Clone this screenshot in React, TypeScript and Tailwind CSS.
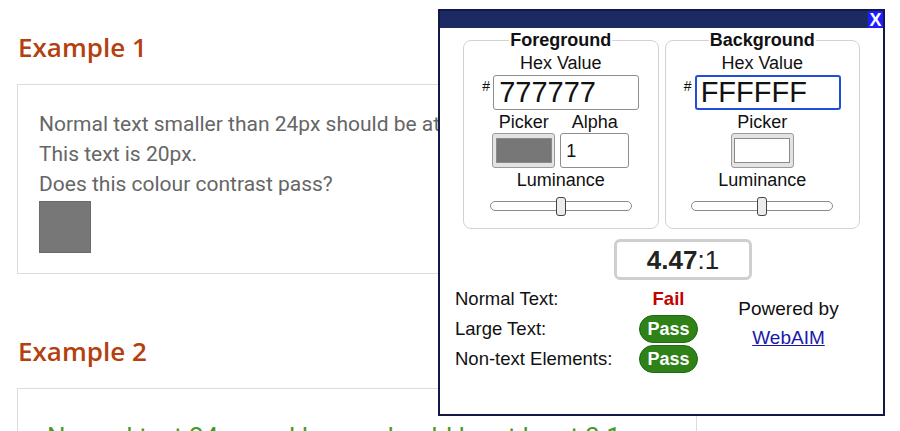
import React from "react";

function Slider() {
  return (
    <div className="relative mx-auto mt-[11px] h-[10px] w-[142px] rounded-full border border-[#8a8a8a] bg-white">
      <div className="absolute left-[65px] top-[-5px] h-[19px] w-[10px] rounded-[3px] border border-[#444] bg-[#ececec]" />
    </div>
  );
}

function Label({ children }: { children: React.ReactNode }) {
  return <div className="text-center text-[18px] leading-[20px] text-[#111]">{children}</div>;
}

function Pass() {
  return (
    <span className="inline-flex h-[28px] w-[59px] items-center justify-center rounded-full border border-[#1f6a12] bg-[#2e8217] text-[18px] font-bold leading-none text-white">
      Pass
    </span>
  );
}

export default function App() {
  return (
    <div className="relative h-[431px] w-[900px] overflow-hidden bg-white">
      {/* Page content */}
      <div className="pl-[17px] pt-[30px]">
        <h2 className="pl-[1px] text-[26px] font-semibold leading-[34px] text-[#b5400f] [font-family:'Open_Sans',sans-serif]">
          Example 1
        </h2>
        <div className="mt-[20px] w-[680px] border border-[#dcdcdc] px-[21px] pb-[20px] pt-[24px] text-[21px] leading-[30px] text-[#666] [font-family:Roboto,sans-serif]">
          <p className="whitespace-nowrap">Normal text smaller than 24px should be at least 4.5:1</p>
          <p>This text is 20px.</p>
          <p>Does this colour contrast pass?</p>
          <div className="mt-[2px] h-[52px] w-[52px] border border-[#6a6a6a] bg-[#777777]" />
        </div>
        <h2 className="mt-[60px] pl-[1px] text-[26px] font-semibold leading-[34px] text-[#b5400f] [font-family:'Open_Sans',sans-serif]">
          Example 2
        </h2>
        <div className="mt-[20px] h-[60px] w-[680px] border border-[#dcdcdc] px-[29px] pt-[32px] text-[26px] leading-[32px] text-[#3f9e22] [font-family:Roboto,sans-serif]">
          <p className="whitespace-nowrap">Normal text 24px and larger should be at least 3:1</p>
        </div>
      </div>

      {/* Contrast checker popup */}
      <div className="absolute left-[438px] top-[9px] flex h-[407px] w-[447px] flex-col border-2 border-[#131845] bg-white text-[#111] [font-family:'Liberation_Sans',Arial,sans-serif]">
        <div className="flex h-[17px] justify-end bg-[#1b2a63]">
          <button className="flex h-[17px] w-[15px] items-center justify-center bg-[#1d1dff] text-[18px] font-bold leading-none text-white">
            X
          </button>
        </div>

        <div className="mt-[2px] flex gap-[6px] px-[23px]">
          {/* Foreground */}
          <fieldset className="h-[199px] w-[196px] rounded-[8px] border border-[#d2d2d2] px-0 pb-[10px]">
            <legend className="mx-auto px-[1px] text-[18px] font-bold leading-[20px]">Foreground</legend>
            <div className="mt-[3px]">
              <Label>Hex Value</Label>
            </div>
            <div className="mt-[2px] flex justify-center">
              <span className="mr-[3px] mt-[4px] text-[14px] leading-[14px]">#</span>
              <div className="flex h-[35px] w-[146px] items-center rounded-[3px] border border-[#8e8e8e] px-[5px] text-[29px] leading-none">
                777777
              </div>
            </div>
            <div className="mt-[2px] flex justify-center gap-[5px]">
              <div className="flex w-[63px] flex-col items-center">
                <Label>Picker</Label>
                <div className="mt-[1px] flex h-[35px] w-[63px] items-center justify-center rounded-[3px] border border-[#9a9a9a] bg-[#e3e3e3]">
                  <div className="h-[25px] w-[56px] border border-[#8a8a8a] bg-[#777777]" />
                </div>
              </div>
              <div className="flex w-[69px] flex-col items-center">
                <Label>Alpha</Label>
                <div className="mt-[1px] flex h-[35px] w-[69px] items-center rounded-[3px] border border-[#8e8e8e] px-[5px] text-[18px] leading-none">
                  1
                </div>
              </div>
            </div>
            <div className="mt-[2px]">
              <Label>Luminance</Label>
            </div>
            <Slider />
          </fieldset>

          {/* Background */}
          <fieldset className="h-[199px] w-[196px] rounded-[8px] border border-[#d2d2d2] px-0 pb-[10px]">
            <legend className="mx-auto px-[1px] text-[18px] font-bold leading-[20px]">Background</legend>
            <div className="mt-[3px]">
              <Label>Hex Value</Label>
            </div>
            <div className="mt-[2px] flex justify-center">
              <span className="mr-[3px] mt-[4px] text-[14px] leading-[14px]">#</span>
              <div className="flex h-[35px] w-[146px] items-center rounded-[3px] border-2 border-[#1f4fd6] px-[4px] text-[29px] leading-none">
                FFFFFF
              </div>
            </div>
            <div className="mt-[2px] flex justify-center">
              <div className="flex flex-col items-center">
                <Label>Picker</Label>
                <div className="mt-[1px] flex h-[35px] w-[63px] items-center justify-center rounded-[3px] border border-[#9a9a9a] bg-[#e3e3e3]">
                  <div className="h-[25px] w-[56px] border border-[#8a8a8a] bg-white" />
                </div>
              </div>
            </div>
            <div className="mt-[2px]">
              <Label>Luminance</Label>
            </div>
            <Slider />
          </fieldset>
        </div>

        <div className="ml-[174px] mt-[10px] flex h-[41px] w-[138px] items-center justify-center rounded-[6px] border-[3px] border-[#cfcfcf] text-[26px] leading-none text-[#222]">
          <span className="font-bold">4.47</span>
          <span>:1</span>
        </div>

        <div className="mt-[4px] flex pl-[15px]">
          <div className="grid grid-cols-[184px_59px] grid-rows-[30px_30px_30px] items-center text-[18.5px] leading-[20px]">
            <span>Normal Text:</span>
            <span className="text-center font-bold text-[#c40000]">Fail</span>
            <span>Large Text:</span>
            <span className="flex justify-center"><Pass /></span>
            <span>Non-text Elements:</span>
            <span className="flex justify-center"><Pass /></span>
          </div>
          <div className="ml-[41px] mt-[10px] flex w-[99px] flex-col items-center text-[19px] leading-[29px]">
            <span className="whitespace-nowrap">Powered by</span>
            <a className="text-[#1a1aa8] underline" href="#">WebAIM</a>
          </div>
        </div>
      </div>
    </div>
  );
}
